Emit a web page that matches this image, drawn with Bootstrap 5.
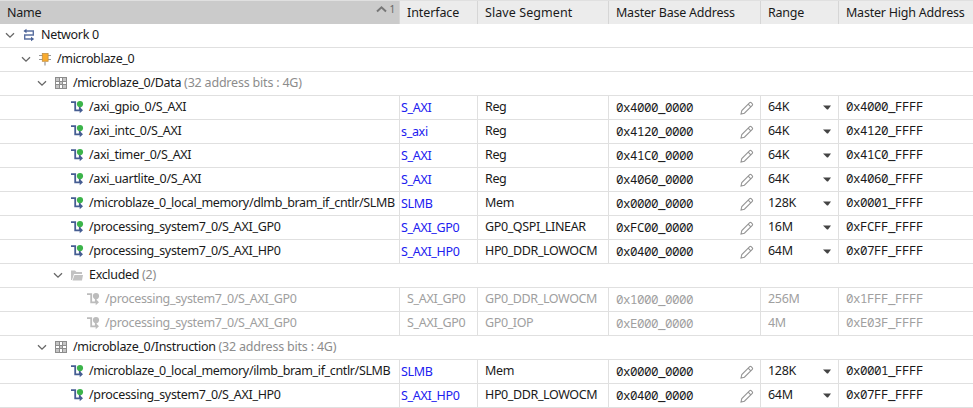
<!DOCTYPE html>
<html lang="en">
<head>
<meta charset="utf-8">
<title>Address Editor</title>
<link href="https://cdn.jsdelivr.net/npm/bootstrap@5.3.0/dist/css/bootstrap.min.css" rel="stylesheet">
<style>
body{font-family:"Noto Sans",sans-serif;font-size:12.5px;letter-spacing:-.32px;line-height:18px;color:#1a1a1a;background:#fff;overflow:hidden;width:973px}
.tree-head{height:24px;border-top:1px solid #e0e0e0;background:#ececec;letter-spacing:-.22px}
.tree-row{height:24px;border-bottom:1px solid #e0e0e0;white-space:nowrap}
.cell{display:flex;align-items:center;flex:none;height:100%;padding:0 7px;white-space:nowrap}
.cell+.cell{border-left:1px solid #e0e0e0}
.tree-row .cell>span{margin-bottom:1px}
.tree-head .cell+.cell{border-color:#d6d6d6}
.c-name{width:399px}.c-if{width:78px}.c-seg{width:131px}.c-base{width:152px}.c-range{width:78px}.c-high{width:135px}
.tree-head .c-name{background:#cbcbcb}
.tree-head .c-if{letter-spacing:-.1px}
.tree-head .c-seg{letter-spacing:.08px}
.tree-row .c-if{color:#2020f0;padding-left:1px}
.tree-row .c-if>span{margin-bottom:-1px}
.tree-row .c-seg>span{letter-spacing:-.38px}
.tree-row .long{letter-spacing:-.36px}
.hex{font-family:"Noto Sans Mono","Noto Sans",monospace;font-size:12.5px;letter-spacing:-.5px}
.tree-row .c-base>.hex{margin-bottom:0}
.tree-row .c-high>.hex{margin-bottom:2px}
.tree-row.off .cell{color:#a0a0a0}
.tree-row.off .c-if{padding-left:7px}
.tree-row.off .c-if>span{margin-bottom:1px}
.note{color:#8c8c8c;letter-spacing:-.2px}
.lv0{padding-left:5px}.lv1{padding-left:21px}.lv2{padding-left:37px}.lv3{padding-left:53px}.lv4{padding-left:70px}.lv5{padding-left:86px}
.ico{width:14px;height:14px;flex:none;margin:0 5px 1px 0}
.c-base .ico{margin:0 -1px 0 0}
.tw{width:10px;height:10px;flex:none;margin:0 7px 1px 0}
.slave{color:#455d92;--dot:#3cb44a}
.off .slave{color:#bcbcbc;--dot:#bcbcbc}
.sort{font-size:10px;color:#666;line-height:12px;margin:0 -3px 7px 0;gap:2px}
</style>
<script src="https://cdn.jsdelivr.net/npm/bootstrap@5.3.0/dist/js/bootstrap.bundle.min.js"></script>
</head>
<body>
<svg class="d-none">
<symbol id="down" viewBox="0 0 10 10"><path d="M1 3.2 5 7.2 9 3.2" fill="none" stroke="#666" stroke-width="1.3"/></symbol>
<symbol id="net" viewBox="0 0 14 14"><path d="M3 3H11.3V7H2.7V11H10" fill="none" stroke="#5b70a0" stroke-width="1.4"/><path d="M4.5 .7V5.3L1.4 3ZM9 8.7V13.3L12.2 11Z" fill="#4a6297"/></symbol>
<symbol id="chip" viewBox="0 0 14 14"><path d="M1 3.5H13M1 7.5H13M7 10V13.5" stroke="#999" stroke-width="1.2"/><rect x="4.3" y="1.5" width="5.8" height="7.8" fill="#f9ab2e" stroke="#c08f45" stroke-width=".8"/></symbol>
<symbol id="grid" viewBox="0 0 14 14"><path d="M1 1H13V13H1Z" fill="#8c8c8c"/><path d="M2 2H5V5H2ZM9 2H12V5H9ZM2 9H5V12H2ZM9 9H12V12H9ZM6 6H8V8H6Z" fill="#c5c5c5"/><path d="M6 2H8V5H6ZM2 6H5V8H2ZM9 6H12V8H9ZM6 9H8V12H6Z" fill="#fff"/></symbol>
<symbol id="slave" viewBox="0 0 14 14"><path d="M1 2.2H5.2V10.3H10" fill="none" stroke="currentColor" stroke-width="1.8"/><path d="M8.9 5H10.7V8L13 10.3 9.7 13.3V11H8.9Z" fill="currentColor"/><circle cx="10" cy="4" r="3.1" style="fill:var(--dot)"/></symbol>
<symbol id="folder" viewBox="0 0 14 14"><path d="M1 12V2.5H5L6.5 4H12V6H4L2 12Z" fill="#c2c2c2"/><path d="M4.5 7H13L12 12.5H2.5Z" fill="#c2c2c2"/></symbol>
<symbol id="pencil" viewBox="0 0 14 14"><path d="M1 13 1.8 9.5 9.7 1.6Q10.4 1 11.2 1.7L12.3 2.8Q13 3.6 12.3 4.3L4.4 12.2ZM8.2 3.2 10.8 5.8" fill="none" stroke="#959595" stroke-width="1.1"/></symbol>
</svg>
<main id="tree">
<div class="tree-head d-flex">
<div class="cell c-name justify-content-between"><span>Name</span><span class="sort d-flex align-items-center"><svg width="11" height="8" viewBox="0 0 11 8"><path d="M1 6.5 5.5 2.3 10 6.5" fill="none" stroke="#777" stroke-width="2"/></svg><span>1</span></span></div>
<div class="cell c-if">Interface</div><div class="cell c-seg">Slave Segment</div><div class="cell c-base">Master Base Address</div><div class="cell c-range">Range</div><div class="cell c-high">Master High Address</div>
</div>
</main>
<script>
// level, icon, name, note | interface, segment, base, range, high, excluded
const rows = [
 [0,'net','Network 0'],
 [1,'chip','/microblaze_0'],
 [2,'grid','/microblaze_0/Data','(32 address bits : 4G)'],
 [4,'slave','/axi_gpio_0/S_AXI','','S_AXI','Reg','0x4000_0000','64K','0x4000_FFFF'],
 [4,'slave','/axi_intc_0/S_AXI','','s_axi','Reg','0x4120_0000','64K','0x4120_FFFF'],
 [4,'slave','/axi_timer_0/S_AXI','','S_AXI','Reg','0x41C0_0000','64K','0x41C0_FFFF'],
 [4,'slave','/axi_uartlite_0/S_AXI','','S_AXI','Reg','0x4060_0000','64K','0x4060_FFFF'],
 [4,'slave','/microblaze_0_local_memory/dlmb_bram_if_cntlr/SLMB','','SLMB','Mem','0x0000_0000','128K','0x0001_FFFF'],
 [4,'slave','/processing_system7_0/S_AXI_GP0','','S_AXI_GP0','GP0_QSPI_LINEAR','0xFC00_0000','16M','0xFCFF_FFFF'],
 [4,'slave','/processing_system7_0/S_AXI_HP0','','S_AXI_HP0','HP0_DDR_LOWOCM','0x0400_0000','64M','0x07FF_FFFF'],
 [3,'folder','Excluded','(2)'],
 [5,'slave','/processing_system7_0/S_AXI_GP0','','S_AXI_GP0','GP0_DDR_LOWOCM','0x1000_0000','256M','0x1FFF_FFFF',true],
 [5,'slave','/processing_system7_0/S_AXI_GP0','','S_AXI_GP0','GP0_IOP','0xE000_0000','4M','0xE03F_FFFF',true],
 [2,'grid','/microblaze_0/Instruction','(32 address bits : 4G)'],
 [4,'slave','/microblaze_0_local_memory/ilmb_bram_if_cntlr/SLMB','','SLMB','Mem','0x0000_0000','128K','0x0001_FFFF'],
 [4,'slave','/processing_system7_0/S_AXI_HP0','','S_AXI_HP0','HP0_DDR_LOWOCM','0x0400_0000','64M','0x07FF_FFFF']
];
const use = (id, cls) => `<svg class="${cls}"><use href="#${id}"/></svg>`;
document.getElementById('tree').insertAdjacentHTML('beforeend', rows.map(([lv,ic,name,note,itf,seg,base,range,high,off]) => {
  const cells = itf ? `<div class="cell c-if"><span>${itf}</span></div><div class="cell c-seg"><span>${seg}</span></div>
   <div class="cell c-base justify-content-between"><span class="hex">${base}</span>${off ? '' : use('pencil','ico')}</div>
   <div class="cell c-range justify-content-between"><span>${range}</span>${off ? '' : '<svg width="8" height="5"><path d="M0 .5H8L5 4.5H4Z" fill="#444"/></svg>'}</div>
   <div class="cell c-high"><span class="hex">${high}</span></div>` : '';
  return `<div class="tree-row d-flex ${off ? 'off' : ''}"><div class="cell c-name lv${lv}">${itf ? '' : use('down','tw')}${use(ic,'ico '+ic)}<span class="${name.length > 40 ? 'long' : ''}">${name}${note ? ` <span class="note">${note}</span>` : ''}</span></div>${cells}</div>`;
}).join(''));
</script>
</body>
</html>
